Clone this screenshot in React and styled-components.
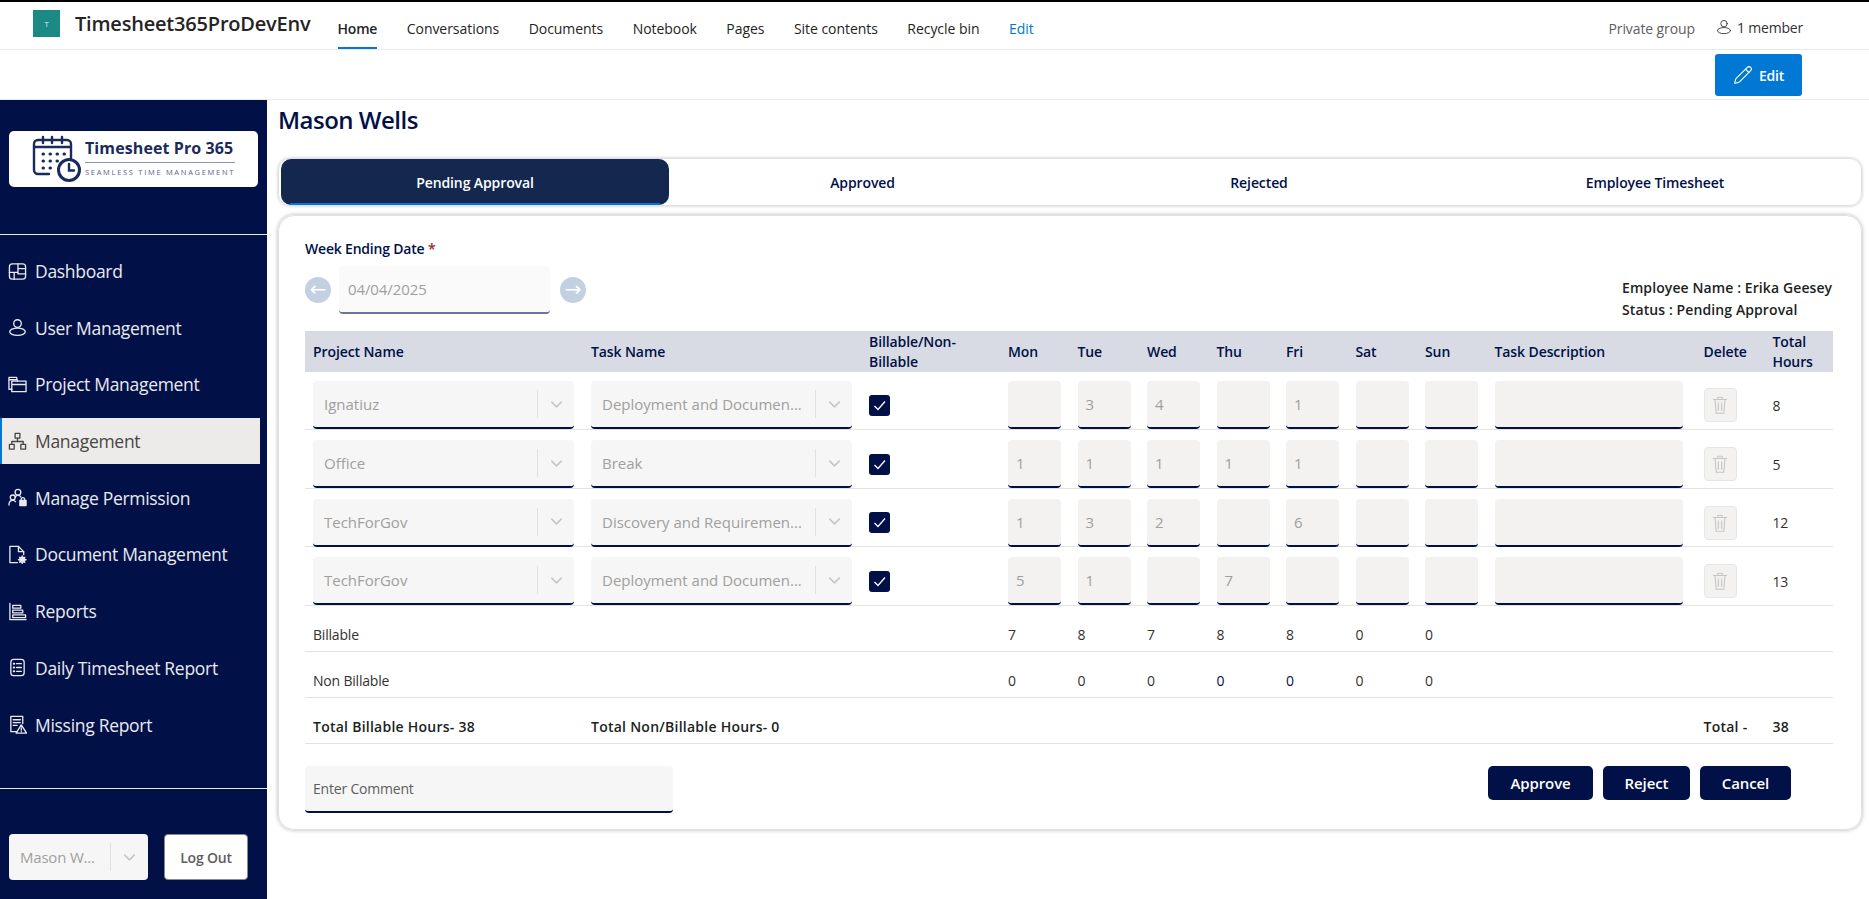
import React from 'react';
import styled, { createGlobalStyle } from 'styled-components';
import { ChevronDown, Pencil } from 'lucide-react';

const NAVY = '#011147';

const GlobalStyle = createGlobalStyle`
  html, body {
    margin: 0;
    padding: 0;
    background: #fff;
  }
  body {
    font-family: "Open Sans", "Noto Sans", "Liberation Sans", sans-serif;
    font-size: 14px;
    letter-spacing: -0.2px;
    color: #323130;
  }
  * {
    box-sizing: border-box;
  }
`;

const Page = styled.div`
  width: 1869px;
  height: 899px;
  overflow: hidden;
  display: flex;
  flex-direction: column;
`;

const SiteBar = styled.header`
  height: 50px;
  flex: none;
  border-top: 2px solid #000;
  border-bottom: 1px solid #eaeaea;
  display: flex;
  align-items: center;
  padding: 0 66px 0 33px;
`;
const SiteLogo = styled.div`
  width: 27px;
  height: 27px;
  margin-top: -4px;
  background: #1b8a85;
  color: #d9efee;
  font-size: 8px;
  display: flex;
  align-items: center;
  justify-content: center;
`;
const SiteTitle = styled.div`
  margin: -4px 0 0 15px;
  font-size: 20px;
  font-weight: 600;
  letter-spacing: -0.2px;
  color: #252423;
`;
const SiteNav = styled.nav`
  display: flex;
  gap: 29.5px;
  margin-left: 27px;
  align-self: stretch;
`;
const NavLink = styled.a`
  display: flex;
  align-items: center;
  height: 100%;
  padding-top: 7px;
  border-bottom: 2px solid ${(p) => (p.$active ? '#0078d4' : 'transparent')};
  margin-bottom: 1px;
  letter-spacing: ${(p) => (p.$active ? '-0.2px' : '-0.05px')};
  color: ${(p) => (p.$blue ? '#0078d4' : '#252423')};
  font-weight: ${(p) => (p.$active ? 600 : 400)};
`;
const SiteRight = styled.div`
  margin-left: auto;
  display: flex;
  align-items: center;
  margin-top: 6px;
`;
const PrivateLabel = styled.span`
  color: #605e5c;
  letter-spacing: -0.1px;
  margin-right: 21px;
`;
const Members = styled.span`
  display: flex;
  align-items: center;
  gap: 5px;
  color: #323130;
  margin-top: -3px;
`;

const EditBar = styled.div`
  height: 50px;
  flex: none;
  border-bottom: 1px solid #eaeaea;
  display: flex;
  justify-content: flex-end;
  padding: 4px 67px 0 0;
`;
const EditButton = styled.button`
  width: 87px;
  height: 42px;
  border: 0;
  border-radius: 3px;
  background: #0078d4;
  color: #fff;
  font: 600 14px "Open Sans", sans-serif;
  letter-spacing: -0.2px;
  display: flex;
  align-items: center;
  justify-content: center;
  gap: 6px;
`;

const Body = styled.div`
  flex: 1;
  display: flex;
  min-height: 0;
`;

const Sidebar = styled.aside`
  width: 267px;
  flex: none;
  background: ${NAVY};
  display: flex;
  flex-direction: column;
`;
const LogoCard = styled.div`
  margin: 31px 9px 0;
  height: 56px;
  border-radius: 5px;
  background: #fff;
  display: flex;
  align-items: center;
  gap: 3px;
  padding-left: 23px;
`;
const LogoText = styled.div`
  display: flex;
  flex-direction: column;
  width: 150px;
  margin-top: -4px;
  color: #1a2a5c;
`;
const LogoTitle = styled.div`
  font-size: 16px;
  line-height: 20px;
  font-weight: 700;
  letter-spacing: 0.1px;
  white-space: nowrap;
`;
const LogoRule = styled.div`
  height: 1px;
  background: #8d95b0;
  margin: 4px 0 4px;
`;
const LogoSub = styled.div`
  font-size: 7.5px;
  line-height: 10px;
  letter-spacing: 1.7px;
  color: #5a6488;
  white-space: nowrap;
`;
const SideRule = styled.div`
  height: 1px;
  margin-top: ${(p) => p.$offset || 0}px;
  background: #e8e8ee;
  flex: none;
`;
const SideNav = styled.nav`
  display: flex;
  flex-direction: column;
  gap: 10.7px;
  padding: 13px 7px 0 0;
  height: 553px;
`;
const SideItem = styled.a`
  height: 46px;
  flex: none;
  display: flex;
  align-items: center;
  gap: 8px;
  padding-left: ${(p) => (p.$active ? '6px' : '8px')};
  border-left: ${(p) => (p.$active ? '2px solid #0078d4' : '0')};
  background: ${(p) => (p.$active ? '#edebe9' : 'transparent')};
  color: ${(p) => (p.$active ? '#484644' : '#e9e9f0')};
  font-size: 17.5px;
  font-weight: 400;
  letter-spacing: -0.3px;
  white-space: nowrap;
`;
const SideFooter = styled.div`
  display: flex;
  gap: 16px;
  padding: 45px 0 0 9px;
`;
const UserSelect = styled.div`
  width: 139px;
  height: 46px;
  border-radius: 4px;
  background: #f6f6f6;
  color: #a19f9d;
  font-size: 15px;
  display: flex;
  align-items: center;
  padding-left: 11px;
`;
const LogoutButton = styled.button`
  width: 84px;
  height: 46px;
  border: 1px solid #8a8886;
  border-radius: 4px;
  background: #fff;
  color: #605e5c;
  font: 600 14px "Open Sans", sans-serif;
  letter-spacing: -0.2px;
`;

const Main = styled.main`
  flex: 1;
  min-width: 0;
  padding: 0 7px 0 11px;
`;
const Heading = styled.h1`
  margin: 0 0 18px;
  height: 40px;
  line-height: 40px;
  font-size: 24px;
  font-weight: 600;
  letter-spacing: -0.5px;
  color: ${NAVY};
`;
const Tabs = styled.div`
  height: 48px;
  border: 1px solid #e1e1e1;
  border-radius: 12px;
  box-shadow: 0 0 3px rgba(0, 0, 0, 0.25);
  display: grid;
  grid-template-columns: 388px 387px 406px 386px;
  padding-left: 2px;
`;
const Tab = styled.div`
  position: relative;
  display: flex;
  align-items: center;
  justify-content: center;
  border-radius: 10px;
  font-weight: 600;
  letter-spacing: -0.1px;
  color: ${(p) => (p.$active ? '#fff' : NAVY)};
  background: ${(p) => (p.$active ? '#14284f' : 'transparent')};

  &::after {
    content: '';
    display: ${(p) => (p.$active ? 'block' : 'none')};
    position: absolute;
    left: 9px;
    right: 9px;
    bottom: 0;
    height: 2px;
    background: #0078d4;
  }
`;
const Card = styled.section`
  margin-top: 9px;
  height: 615px;
  border: 1px solid #e1e1e1;
  border-radius: 16px;
  box-shadow: 0 0 4px rgba(0, 0, 0, 0.3);
  padding: 22px 28px 0 26px;
`;
const FieldLabel = styled.div`
  height: 22px;
  line-height: 22px;
  font-weight: 600;
  color: ${NAVY};

  span {
    color: #a4262c;
  }
`;
const DateRow = styled.div`
  margin-top: 6px;
  height: 55px;
  display: flex;
  justify-content: space-between;
`;
const DatePicker = styled.div`
  display: flex;
  align-items: center;
  gap: 8px;
  height: 48px;
`;
const ArrowButton = styled.div`
  width: 26px;
  height: 26px;
  margin-left: ${(p) => p.$offset || 0}px;
  padding-bottom: 3px;
  border-radius: 50%;
  background: #c3d0e2;
  color: #fff;
  font-size: 20px;
  font-family: "DejaVu Sans", sans-serif;
  display: flex;
  align-items: center;
  justify-content: center;
`;
const DateInput = styled.div`
  width: 211px;
  height: 48px;
  padding-left: 9px;
  border-radius: 4px;
  border-bottom: 2px solid #6b7598;
  background: #fafafa;
  color: #a19f9d;
  font-size: 15px;
  letter-spacing: -0.1px;
  display: flex;
  align-items: center;
`;
const EmployeeInfo = styled.div`
  width: 211px;
  padding-top: 11px;
  font-weight: 600;
  letter-spacing: 0.1px;
  line-height: 22px;
  color: #201f1e;
  white-space: nowrap;
`;

const COLUMNS = '278px 278px 139px repeat(7, 69.5px) 209px 69px 68.5px';

const HeaderRow = styled.div`
  margin-top: 10px;
  height: 41px;
  display: grid;
  grid-template-columns: ${COLUMNS};
  align-items: center;
  background: #d8dbe3;
`;
const HeaderCell = styled.div`
  padding: 0 8px;
  line-height: 20px;
  font-weight: 600;
  letter-spacing: -0.1px;
  color: ${NAVY};
`;
const EntryRow = styled.div`
  display: grid;
  grid-template-columns: ${COLUMNS};
  height: 58.7px;
  padding-top: 10px;
  border-bottom: 1px solid #e3e3e3;

  &:first-of-type {
    height: 58px;
    padding-top: 9px;
  }
`;
const SummaryRow = styled.div`
  display: grid;
  grid-template-columns: ${COLUMNS};
  height: 46px;
  padding-top: 12px;
  align-items: center;
  border-bottom: 1px solid #e3e3e3;
  font-weight: ${(p) => (p.$bold ? 600 : 400)};
  letter-spacing: ${(p) => (p.$bold ? '0.25px' : '-0.2px')};
  color: ${(p) => (p.$bold ? '#201f1e' : '#323130')};
`;
const Cell = styled.div`
  padding: 0 8px;
  min-height: 48px;
  display: flex;
  align-items: center;
  white-space: nowrap;
`;
const SummaryCell = styled.div`
  padding: 0 8px;
  white-space: nowrap;
  grid-column: ${(p) => p.$span || 'auto'};
  color: ${(p) => p.$color || 'inherit'};
`;
const SelectBox = styled.div`
  width: 261px;
  height: 48px;
  flex: none;
  border-radius: 4px;
  border-bottom: 2px solid ${NAVY};
  background: #f6f6f6;
  color: #a19f9d;
  font-size: 15px;
  letter-spacing: 0;
  display: flex;
  align-items: center;
  padding-left: 11px;
`;
const SelectValue = styled.span`
  flex: 1;
  min-width: 0;
  white-space: nowrap;
`;
const SelectAside = styled.span`
  flex: none;
  width: ${(p) => p.$width || 37}px;
  height: 28px;
  margin-left: 6px;
  border-left: 1px solid #e2e2e2;
  color: #c8c6c4;
  display: flex;
  align-items: center;
  justify-content: center;
`;
const CheckBox = styled.div`
  width: 21px;
  height: 21px;
  border-radius: 3px;
  background: ${NAVY};
  color: #fff;
  display: flex;
  align-items: center;
  justify-content: center;
`;
const TextBox = styled.div`
  width: ${(p) => p.$width || 53}px;
  height: 48px;
  flex: none;
  padding-left: 8px;
  border-radius: 4px;
  border-bottom: 2px solid ${NAVY};
  background: #f3f2f1;
  color: #a19f9d;
  font-size: 15px;
  display: flex;
  align-items: center;
`;
const DeleteButton = styled.div`
  width: 33px;
  height: 34px;
  border: 1px solid #e6e6e6;
  border-radius: 4px;
  background: #f3f2f1;
  color: #c8c6c4;
  display: flex;
  align-items: center;
  justify-content: center;
`;
const BottomRow = styled.div`
  margin-top: 22px;
  display: flex;
  justify-content: space-between;
  align-items: flex-start;
`;
const CommentBox = styled.div`
  width: 368px;
  height: 47px;
  padding-left: 8px;
  border-radius: 4px;
  border-bottom: 2px solid ${NAVY};
  background: #f6f6f6;
  color: #605e5c;
  display: flex;
  align-items: center;
`;
const Actions = styled.div`
  display: flex;
  gap: 10px;
  padding-right: 42px;
`;
const ActionButton = styled.button`
  width: ${(p) => p.$width}px;
  height: 34px;
  border: 0;
  border-radius: 5px;
  background: ${NAVY};
  color: #fff;
  font: 600 15px "Open Sans", sans-serif;
  letter-spacing: -0.1px;
`;

const Icon = ({ size = 19, children, width = 1.4 }) => (
  <svg
    width={size}
    height={size}
    viewBox="0 0 20 20"
    fill="none"
    stroke="currentColor"
    strokeWidth={width}
    strokeLinecap="round"
    strokeLinejoin="round"
    style={{ flex: 'none' }}
  >
    {children}
  </svg>
);

const SIDE_ICONS = {
  dashboard: (
    <>
      <rect x="1.5" y="2" width="17" height="16" rx="3" />
      <path d="M10.5 2v10.5M1.5 11h9M10.5 7h8M10.5 12.5h8M6.5 11v7" />
    </>
  ),
  user: (
    <>
      <circle cx="10" cy="5.8" r="4" />
      <ellipse cx="10" cy="14.5" rx="8.2" ry="3.8" />
    </>
  ),
  project: (
    <>
      <path d="M4 17.5V6.5h15v11zM4 10h15" />
      <path d="M4 15H1V2.5h8l1 4M1 5h8.5" />
    </>
  ),
  org: (
    <>
      <rect x="7.5" y="1.5" width="5" height="5" />
      <rect x="1.5" y="13" width="5" height="5" />
      <rect x="13.5" y="13" width="5" height="5" />
      <path d="M10 6.5V10M4 13v-3h12v3" />
    </>
  ),
  permission: (
    <>
      <circle cx="10.5" cy="4.5" r="3" />
      <circle cx="5" cy="10" r="2.6" />
      <path d="M1 18c0-3 1.5-5 4-5 1.5 0 2.5.5 3 1.5" />
      <path d="M7.5 9.5c1-1.2 2-1.7 3-1.7 1.2 0 2.5.5 3 1.7" />
      <rect x="12.5" y="13" width="6.5" height="5.5" fill="currentColor" />
      <path d="M14 13v-1.5a1.8 1.8 0 0 1 3.5 0V13" />
    </>
  ),
  document: (
    <>
      <path d="M10 18.5H2V1.5h9l5.5 5.5v3" />
      <path d="M11 1.5V7h5.5" />
      <circle cx="15" cy="15.5" r="2.6" fill="currentColor" />
      <path d="M15 11.5v1M15 18.5v1M11 15.5h1M18 15.5h1M12.3 12.8l.7.7M17 17.5l.7.7M12.3 18.2l.7-.7M17 13.5l.7-.7" />
    </>
  ),
  reports: (
    <>
      <path d="M2 1.5v17h17" />
      <path d="M5 3.5h8.5v3H5zM5 8.5h10.5v3H5zM5 13.5h13.5v3H5z" />
    </>
  ),
  daily: (
    <>
      <rect x="3" y="1.5" width="14" height="17" rx="3" />
      <path d="M9 6h5M9 10h5M9 14h5" />
      <path d="M6 6h.6M6 10h.6M6 14h.6" strokeWidth="2" />
    </>
  ),
  missing: (
    <>
      <path d="M9 17.5H3V1.5h12.5V9" />
      <path d="M5.5 5h7.5M5.5 8h7.5M5.5 11h4" />
      <path d="M14 10.5l5.5 8.5H8.5z" />
      <path d="M14 13.5v2.5M14 17.5v.2" />
    </>
  ),
};

const SIDE_LINKS = [
  ['Dashboard', 'dashboard'],
  ['User Management', 'user'],
  ['Project Management', 'project'],
  ['Management', 'org', true],
  ['Manage Permission', 'permission'],
  ['Document Management', 'document'],
  ['Reports', 'reports'],
  ['Daily Timesheet Report', 'daily'],
  ['Missing Report', 'missing'],
];

const TOP_LINKS = ['Conversations', 'Documents', 'Notebook', 'Pages', 'Site contents', 'Recycle bin'];
const DAY_NAMES = ['Mon', 'Tue', 'Wed', 'Thu', 'Fri', 'Sat', 'Sun'];

const ENTRIES = [
  { project: 'Ignatiuz', task: 'Deployment and Documen...', days: ['', '3', '4', '', '1', '', ''], total: 8 },
  { project: 'Office', task: 'Break', days: ['1', '1', '1', '1', '1', '', ''], total: 5 },
  { project: 'TechForGov', task: 'Discovery and Requiremen...', days: ['1', '3', '2', '', '6', '', ''], total: 12 },
  { project: 'TechForGov', task: 'Deployment and Documen...', days: ['5', '1', '', '7', '', '', ''], total: 13 },
];

const Select = ({ value }) => (
  <SelectBox>
    <SelectValue>{value}</SelectValue>
    <SelectAside>
      <ChevronDown size={19} strokeWidth={2} />
    </SelectAside>
  </SelectBox>
);

const TrashIcon = () => (
  <Icon size={22} width={1}>
    <path d="M4 5h12M8 5V3h4v2M5.5 5l1 12.5h7l1-12.5M8.5 8v7M11.5 8v7" />
  </Icon>
);

const CalendarLogo = () => (
  <svg width="50" height="48" viewBox="0 0 50 48" fill="none" stroke="#1a2a5c" strokeWidth="2.4" strokeLinecap="round">
    <path d="M17 39H6a4 4 0 0 1-4-4V9a4 4 0 0 1 4-4h29a4 4 0 0 1 4 4v14" />
    <path d="M2 12h37M11 2v6M20 2v6M30 2v6" />
    <path d="M11 19h.5M18 19h.5M25 19h.5M32 19h.5M11 26h.5M18 26h.5M25 26h.5M11 33h.5M18 33h.5" strokeWidth="3" />
    <circle cx="37" cy="35" r="10.5" strokeWidth="3" />
    <path d="M37 29v6.5h5" />
  </svg>
);

const App = () => (
  <Page>
    <GlobalStyle />
    <SiteBar>
      <SiteLogo>T</SiteLogo>
      <SiteTitle>Timesheet365ProDevEnv</SiteTitle>
      <SiteNav>
        <NavLink $active>Home</NavLink>
        {TOP_LINKS.map((link) => (
          <NavLink key={link}>{link}</NavLink>
        ))}
        <NavLink $blue>Edit</NavLink>
      </SiteNav>
      <SiteRight>
        <PrivateLabel>Private group</PrivateLabel>
        <Members>
          <Icon size={16} width={1.1}>{SIDE_ICONS.user}</Icon>
          1 member
        </Members>
      </SiteRight>
    </SiteBar>
    <EditBar>
      <EditButton>
        <Pencil size={20} strokeWidth={1.3} />
        Edit
      </EditButton>
    </EditBar>
    <Body>
      <Sidebar>
        <LogoCard>
          <CalendarLogo />
          <LogoText>
            <LogoTitle>Timesheet Pro 365</LogoTitle>
            <LogoRule />
            <LogoSub>SEAMLESS TIME MANAGEMENT</LogoSub>
          </LogoText>
        </LogoCard>
        <SideRule $offset={47} />
        <SideNav>
          {SIDE_LINKS.map(([label, icon, active]) => (
            <SideItem key={label} $active={active}>
              <Icon>{SIDE_ICONS[icon]}</Icon>
              {label}
            </SideItem>
          ))}
        </SideNav>
        <SideRule />
        <SideFooter>
          <UserSelect>
            <SelectValue>Mason W...</SelectValue>
            <SelectAside $width={38}>
              <ChevronDown size={19} strokeWidth={2} />
            </SelectAside>
          </UserSelect>
          <LogoutButton>Log Out</LogoutButton>
        </SideFooter>
      </Sidebar>
      <Main>
        <Heading>Mason Wells</Heading>
        <Tabs>
          <Tab $active>Pending Approval</Tab>
          <Tab>Approved</Tab>
          <Tab>Rejected</Tab>
          <Tab>Employee Timesheet</Tab>
        </Tabs>
        <Card>
          <FieldLabel>
            Week Ending Date <span>*</span>
          </FieldLabel>
          <DateRow>
            <DatePicker>
              <ArrowButton>←</ArrowButton>
              <DateInput>04/04/2025</DateInput>
              <ArrowButton $offset={2}>→</ArrowButton>
            </DatePicker>
            <EmployeeInfo>
              <div>Employee Name : Erika Geesey</div>
              <div>Status : Pending Approval</div>
            </EmployeeInfo>
          </DateRow>
          <HeaderRow>
            <HeaderCell>Project Name</HeaderCell>
            <HeaderCell>Task Name</HeaderCell>
            <HeaderCell>Billable/Non-Billable</HeaderCell>
            {DAY_NAMES.map((day) => (
              <HeaderCell key={day}>{day}</HeaderCell>
            ))}
            <HeaderCell>Task Description</HeaderCell>
            <HeaderCell>Delete</HeaderCell>
            <HeaderCell>Total Hours</HeaderCell>
          </HeaderRow>
          <div>
            {ENTRIES.map((entry, i) => (
              <EntryRow key={i}>
                <Cell><Select value={entry.project} /></Cell>
                <Cell><Select value={entry.task} /></Cell>
                <Cell>
                  <CheckBox>
                    <svg width="13" height="13" viewBox="0 0 13 13" fill="none" stroke="currentColor" strokeWidth="1.3">
                      <path d="M1.5 7l3.5 3.5 7-8" />
                    </svg>
                  </CheckBox>
                </Cell>
                {entry.days.map((value, d) => (
                  <Cell key={d}><TextBox>{value}</TextBox></Cell>
                ))}
                <Cell><TextBox $width={188} /></Cell>
                <Cell><DeleteButton><TrashIcon /></DeleteButton></Cell>
                <Cell>{entry.total}</Cell>
              </EntryRow>
            ))}
          </div>
          <SummaryRow>
            <SummaryCell $span="1 / 4">Billable</SummaryCell>
            {[7, 8, 7, 8, 8, 0, 0].map((n, d) => (
              <SummaryCell key={d}>{n}</SummaryCell>
            ))}
          </SummaryRow>
          <SummaryRow>
            <SummaryCell $span="1 / 4">Non Billable</SummaryCell>
            {[0, 0, 0, 0, 0, 0, 0].map((n, d) => (
              <SummaryCell key={d} $color={d === 3 || d === 4 ? NAVY : undefined}>{n}</SummaryCell>
            ))}
          </SummaryRow>
          <SummaryRow $bold>
            <SummaryCell>Total Billable Hours- 38</SummaryCell>
            <SummaryCell>Total Non/Billable Hours- 0</SummaryCell>
            <SummaryCell $span="12 / 13">Total -</SummaryCell>
            <SummaryCell $span="13 / 14">38</SummaryCell>
          </SummaryRow>
          <BottomRow>
            <CommentBox>Enter Comment</CommentBox>
            <Actions>
              <ActionButton $width={105}>Approve</ActionButton>
              <ActionButton $width={87}>Reject</ActionButton>
              <ActionButton $width={91}>Cancel</ActionButton>
            </Actions>
          </BottomRow>
        </Card>
      </Main>
    </Body>
  </Page>
);

export default App;
